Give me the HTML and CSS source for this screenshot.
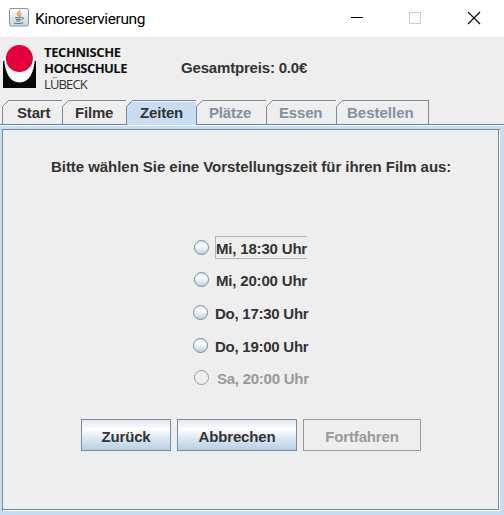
FILE: index.html
```html
<!DOCTYPE html>
<html lang="de">
<head>
<meta charset="utf-8">
<title>Kinoreservierung</title>
<link rel="stylesheet" href="styles.css">
</head>
<body>
<div class="window">
  <header class="titlebar">
    <svg class="java" width="20" height="19" viewBox="0 0 20 19">
      <defs><linearGradient id="tile" x1="0" y1="0" x2="0" y2="1"><stop offset="0" stop-color="#fff"/><stop offset="1" stop-color="#cbd3dc"/></linearGradient></defs>
      <rect x=".5" y=".5" width="19" height="17.5" rx="1.5" fill="url(#tile)" stroke="#8497ad"/>
      <path d="M10.8 2.200C11.400 4 7.800 4.800 8.700 6.600c.3.800 1 1.200 1 2M12.300 5c-1.900.8-1.800 1.700-1.200 2.400.3.500 0 1-.4 1.400" fill="none" stroke="#e5812b" stroke-width="1.300"/>
      <path d="M6 9.700h6.600M6.800 11.400h5M7.300 13h4M5 14.900c2.500 1 7 .9 9.300-.2M12.800 9.500c2.400-.5 2.300 1.900-.4 2.600" fill="none" stroke="#4e7191" stroke-width="1"/>
    </svg>
    <span class="caption">Kinoreservierung</span>
    <svg class="controls" width="128" height="14" viewBox="0 0 128 14" shape-rendering="crispEdges">
      <path d="M0 6.500h12" stroke="#000"/>
      <rect x="58.500" y="1.500" width="11" height="11" fill="none" stroke="#ccc"/>
      <path d="M117 1l12 12M129 1l-12 12" stroke="#000" stroke-width="1.100" shape-rendering="auto"/>
    </svg>
  </header>
  <div class="top">
    <svg class="mark" width="34" height="46" viewBox="0 0 34 46">
      <path d="M1 16h33v28H1z" fill="#080808"/>
      <path d="M2 14C3 29 8 38.500 17.500 38.500S32 29 33 14z" fill="#fff"/>
      <path d="M1 14h2v3H1zM32 14h2v3h-2z" fill="#eee"/>
      <circle cx="17.400" cy="14.500" r="13.500" fill="#e4003a"/>
    </svg>
    <div class="name"><b class="n1">TECHNISCHE</b><b class="n2">HOCHSCHULE</b><span class="n3">LÜBECK</span></div>
    <div class="price">Gesamtpreis: 0.0€</div>
  </div>
  <nav class="tabs">
    <div class="tab t1"><svg width="7" height="7"><path d="M0 0h7L0 7z" fill="#eee"/><path d="M.5 6.500L6.500.5" stroke="#7a8a99"/></svg>Start</div>
    <div class="tab t2"><svg width="7" height="7"><path d="M0 0h7L0 7z" fill="#eee"/><path d="M.5 6.500L6.500.5" stroke="#7a8a99"/></svg>Filme</div>
    <div class="tab t3 active"><svg width="7" height="7"><path d="M0 0h7L0 7z" fill="#eee"/><path d="M.5 6.500L6.500.5" stroke="#6382bf"/></svg>Zeiten</div>
    <div class="tab t4 off"><svg width="7" height="7"><path d="M0 0h7L0 7z" fill="#eee"/><path d="M.5 6.500L6.500.5" stroke="#7a8a99"/></svg>Plätze</div>
    <div class="tab t5 off"><svg width="7" height="7"><path d="M0 0h7L0 7z" fill="#eee"/><path d="M.5 6.500L6.500.5" stroke="#7a8a99"/></svg>Essen</div>
    <div class="tab t6 off"><svg width="7" height="7"><path d="M0 0h7L0 7z" fill="#eee"/><path d="M.5 6.500L6.500.5" stroke="#7a8a99"/></svg>Bestellen</div>
  </nav>
  <div class="frame">
    <main class="panel">
      <p class="prompt">Bitte wählen Sie eine Vorstellungszeit für ihren Film aus:</p>
      <div class="options">
        <label class="option o1"><i class="radio"></i><span class="focus">Mi, 18:30 Uhr</span></label>
        <label class="option o2"><i class="radio"></i><span>Mi, 20:00 Uhr</span></label>
        <label class="option o3"><i class="radio"></i><span>Do, 17:30 Uhr</span></label>
        <label class="option o4"><i class="radio"></i><span>Do, 19:00 Uhr</span></label>
        <label class="option o5"><i class="radio"></i><span>Sa, 20:00 Uhr</span></label>
      </div>
      <div class="buttons">
        <button class="b1">Zurück</button><button class="b2">Abbrechen</button><button class="b3" disabled>Fortfahren</button>
      </div>
    </main>
  </div>
</div>
</body>
</html>
```
FILE: styles.css
```css
* { box-sizing: border-box; }
body { margin: 0; background: #eee; color: #333; font: bold 15px/18px "Liberation Sans", Arial, sans-serif; letter-spacing: -.18px; }
.window { width: 504px; height: 515px; display: flex; flex-direction: column; overflow: hidden; }
.titlebar { height: 37px; background: #fff; display: flex; align-items: center; padding-left: 9px; flex: none; }
.java { margin-top: -2px; }
.caption { margin: 1px 0 0 6px; width: 311px; color: #000; font: 15.5px/20px Roboto, "Open Sans", sans-serif; letter-spacing: -.4px; white-space: nowrap; }
.controls { margin: -2px 0 0 5px; overflow: visible; }
.top { height: 63px; display: flex; flex: none; }
.mark { margin: 7px 0 0 2px; }
.name { width: 138px; margin: 7px 0 0 8px; color: #111; font: 13px/16px "Open Sans", sans-serif; display: flex; flex-direction: column; }
.name b { font-weight: 700; }
.name span { color: #333; }
.n1 { letter-spacing: -.4px; }
.n2 { letter-spacing: -.55px; }
.n3 { letter-spacing: -.85px; }
.price { margin-top: 22px; margin-left: -1px; white-space: nowrap; }
.tabs { height: 25px; padding-left: 2px; display: flex; flex: none; border-bottom: 1px solid #6382bf; }
.tab { position: relative; height: 24px; border: solid #7a8a99; border-width: 1px 1px 0 0; padding: 3px 0 0 15px; white-space: nowrap; }
.tab svg { position: absolute; left: -1px; top: -1px; }
.t1 { width: 61px; border-left-width: 1px; padding-left: 14px; }
.t2 { width: 64px; padding-left: 12px; }
.t3 { width: 70px; padding-left: 13px; }
.t4 { width: 70px; padding-left: 12px; }
.t5 { width: 70px; padding-left: 12px; }
.t6 { width: 92px; padding-left: 10px; letter-spacing: 0; }
.active { height: 25px; background: #c8ddf2; border-color: #6382bf; box-shadow: inset 0 1px #fff; }
.off { color: #8290a2; }
.frame { flex: 1; min-height: 0; background: #c8ddf2; border-top: 1px solid #f5f9fd; padding: 3px 3px 4px 2px; }
.panel { height: 382px; width: 498px; background: #eee; border: 1px solid #7a8a99; border-right: 0; border-bottom: 0; box-shadow: inset -1px -1px #fff, inset -2px -2px #7a8a99; display: flex; flex-direction: column; }
.prompt { margin: 28px 0 0 48px; white-space: nowrap; letter-spacing: -.05px; }
.options { margin: 55px 0 0 191px; display: flex; flex-direction: column; }
.option { height: 32.6px; display: flex; align-items: center; white-space: nowrap; }
.radio { flex: none; width: 15px; height: 15px; border: 1px solid #7a8a99; border-radius: 50%; background: linear-gradient(#dde8f3, #fff 35%, #b8cfe5); }
.option span { margin-left: 6px; height: 23px; line-height: 24px; border: 1px solid transparent; }
.option .focus { border-color: #a3b8cc; border-right: 0; }
.o3, .o4 { margin-left: -1px; letter-spacing: -.25px; }
.o5 { color: #999; letter-spacing: -.25px; }
.o5 span { margin-left: 7px; }
.o5 .radio { background: none; border-color: #999; }
.buttons { display: flex; gap: 6px; margin: 25px 0 0 78px; }
button { height: 32px; padding: 4px 0 0; border: 1px solid #7a8a99; border-radius: 0; background: linear-gradient(#dde8f3, #fff 30%, #dce8f3 60%, #b8cfe5); color: #333; font: inherit; letter-spacing: -.15px; }
.b1 { width: 90px; }
.b2 { width: 120px; }
.b3 { width: 118px; background: #eee; border-color: #999; color: #999; }
```
